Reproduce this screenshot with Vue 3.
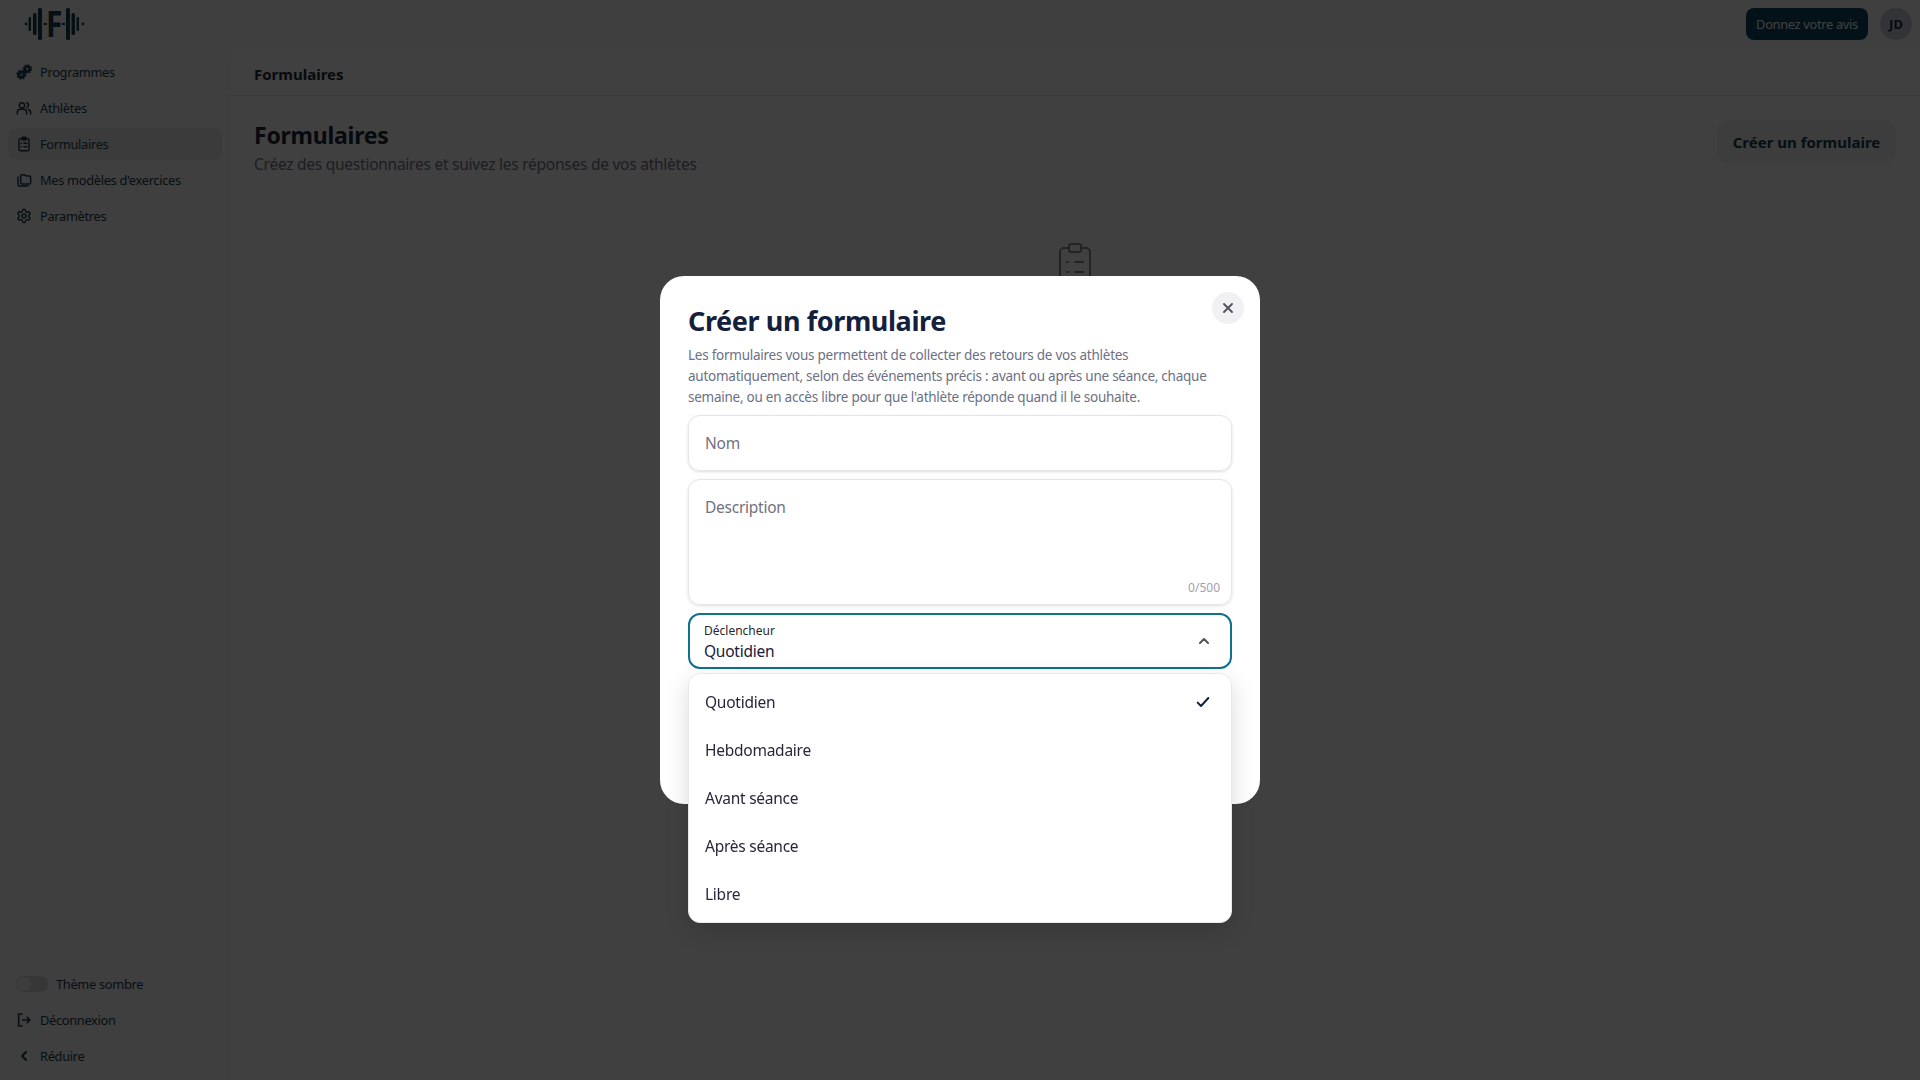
<script setup>
const nav = [
  { label: 'Programmes', icon: 'prog' },
  { label: 'Athlètes', icon: 'users' },
  { label: 'Formulaires', icon: 'clip', active: true },
  { label: "Mes modèles d'exercices", icon: 'copy' },
  { label: 'Paramètres', icon: 'gear' }
]
const options = ['Quotidien', 'Hebdomadaire', 'Avant séance', 'Après séance', 'Libre']
</script>

<template>
  <div class="page">
    <aside class="side">
      <div class="logo">
        <svg width="62" height="34" viewBox="0 0 62 34" fill="currentColor">
          <circle cx="2" cy="17" r="1.4" />
          <rect x="4.5" y="10" width="2.5" height="14" rx="1" />
          <rect x="9" y="6" width="3.5" height="22" rx="1.5" />
          <rect x="14" y="1" width="4" height="32" rx="1.5" />
          <rect x="19.5" y="16" width="3.5" height="2" />
          <rect x="38" y="16" width="3" height="2" />
          <rect x="42" y="1" width="4" height="32" rx="1.5" />
          <rect x="47.5" y="6" width="3.5" height="22" rx="1.5" />
          <rect x="52.5" y="10" width="2.5" height="14" rx="1" />
          <circle cx="59" cy="17" r="1.4" />
        </svg>
        <span class="logo-f">F</span>
      </div>
      <nav class="nav">
        <a v-for="n in nav" :key="n.label" class="item" :class="{ active: n.active }">
          <svg class="ic" viewBox="0 0 24 24" fill="none" stroke="currentColor" stroke-width="2.2" stroke-linecap="round" stroke-linejoin="round">
            <template v-if="n.icon === 'prog'">
              <circle cx="8" cy="16" r="5" fill="currentColor" />
              <circle cx="8" cy="16" r="6.5" stroke-width="2.4" stroke-dasharray="2.2 2.9" stroke-linecap="butt" />
              <circle cx="17" cy="7.5" r="4.5" fill="currentColor" />
              <circle cx="17" cy="7.5" r="6" stroke-width="2.4" stroke-dasharray="2.2 2.5" stroke-linecap="butt" />
              <path d="M6.5 14.5l3 3M9.5 14.5l-3 3M15.5 6l3 3M18.5 6l-3 3" stroke="#fff" stroke-width="1.3" />
            </template>
            <template v-else-if="n.icon === 'users'">
              <circle cx="9" cy="8" r="4" />
              <path d="M2 21v-2a5 5 0 0 1 5-5h4a5 5 0 0 1 5 5v2" />
              <path d="M16 4.2a4 4 0 0 1 0 7.6M22 21v-2a5 5 0 0 0-3.5-4.8" />
            </template>
            <template v-else-if="n.icon === 'clip'">
              <rect x="4.5" y="4" width="15" height="18" rx="2" />
              <rect x="9" y="2" width="6" height="4" rx="1" />
              <path d="M8 11h.5M12 11h4M8 16h.5M12 16h4" />
            </template>
            <template v-else-if="n.icon === 'copy'">
              <path d="M7 16V6a2 2 0 0 1 2-2h4l2 2h5a2 2 0 0 1 2 2v8a2 2 0 0 1-2 2H9a2 2 0 0 1-2-2z" />
              <path d="M3 8v11a2 2 0 0 0 2 2h13" />
            </template>
            <template v-else>
              <circle cx="12" cy="12" r="3" />
              <path d="M12.22 2h-.44a2 2 0 0 0-2 2v.18a2 2 0 0 1-1 1.73l-.43.25a2 2 0 0 1-2 0l-.15-.08a2 2 0 0 0-2.73.73l-.22.38a2 2 0 0 0 .73 2.73l.15.1a2 2 0 0 1 1 1.72v.51a2 2 0 0 1-1 1.74l-.15.09a2 2 0 0 0-.73 2.73l.22.38a2 2 0 0 0 2.73.73l.15-.08a2 2 0 0 1 2 0l.43.25a2 2 0 0 1 1 1.73V20a2 2 0 0 0 2 2h.44a2 2 0 0 0 2-2v-.18a2 2 0 0 1 1-1.73l.43-.25a2 2 0 0 1 2 0l.15.08a2 2 0 0 0 2.73-.73l.22-.39a2 2 0 0 0-.73-2.73l-.15-.08a2 2 0 0 1-1-1.74v-.5a2 2 0 0 1 1-1.74l.15-.09a2 2 0 0 0 .73-2.73l-.22-.38a2 2 0 0 0-2.73-.73l-.15.08a2 2 0 0 1-2 0l-.43-.25a2 2 0 0 1-1-1.73V4a2 2 0 0 0-2-2z" />
            </template>
          </svg>
          <span>{{ n.label }}</span>
        </a>
      </nav>
      <div class="side-bottom">
        <div class="item theme"><span class="toggle"><span class="knob"></span></span><span>Thème sombre</span></div>
        <a class="item">
          <svg class="ic" viewBox="0 0 24 24" fill="none" stroke="currentColor" stroke-width="2.4" stroke-linecap="round" stroke-linejoin="round"><path d="M9 3H4v18h5M10 12h11M17 8l4 4-4 4" /></svg>
          <span>Déconnexion</span>
        </a>
        <a class="item">
          <svg class="ic" viewBox="0 0 24 24" fill="none" stroke="currentColor" stroke-width="3" stroke-linecap="round" stroke-linejoin="round"><path d="M15 6l-6 6 6 6" /></svg>
          <span>Réduire</span>
        </a>
      </div>
    </aside>

    <div class="right">
      <header class="top">
        <button class="feedback">Donnez votre avis</button>
        <span class="avatar">JD</span>
      </header>
      <main class="main">
        <div class="crumb">Formulaires</div>
        <div class="body">
          <div class="head">
            <div>
              <h1>Formulaires</h1>
              <p>Créez des questionnaires et suivez les réponses de vos athlètes</p>
            </div>
            <button class="create">Créer un formulaire</button>
          </div>
          <div class="empty">
            <svg width="48" height="48" viewBox="0 0 24 24" fill="none" stroke="currentColor" stroke-width="1" stroke-linecap="round" stroke-linejoin="round">
              <rect x="4.5" y="4" width="15" height="18" rx="2" />
              <rect x="9" y="2" width="6" height="4" rx="1" fill="#fff" />
              <path d="M8 11h.5M12 11h4M8 16h.5M12 16h4" />
            </svg>
          </div>
        </div>
      </main>
    </div>

    <div class="overlay">
      <section class="modal">
        <button class="close" aria-label="Fermer">
          <svg width="16" height="16" viewBox="0 0 24 24" fill="none" stroke="currentColor" stroke-width="2.8" stroke-linecap="round"><path d="M6 6l12 12M18 6L6 18" /></svg>
        </button>
        <h2>Créer un formulaire</h2>
        <p class="desc">Les formulaires vous permettent de collecter des retours de vos athlètes automatiquement, selon des événements précis : avant ou après une séance, chaque semaine, ou en accès libre pour que l'athlète réponde quand il le souhaite.</p>
        <div class="field name">Nom</div>
        <div class="field area">
          <span>Description</span>
          <small>0/500</small>
        </div>
        <div class="select-wrap">
          <div class="select">
            <div class="select-text">
              <label>Déclencheur</label>
              <span>Quotidien</span>
            </div>
            <svg width="16" height="16" viewBox="0 0 24 24" fill="none" stroke="#52525b" stroke-width="3" stroke-linecap="round" stroke-linejoin="round"><path d="M6 15l6-6 6 6" /></svg>
          </div>
          <ul class="menu">
            <li v-for="(o, i) in options" :key="o">
              <span>{{ o }}</span>
              <svg v-if="i === 0" width="16" height="16" viewBox="0 0 24 24" fill="none" stroke="#14203c" stroke-width="3" stroke-linecap="round" stroke-linejoin="round"><path d="M4 13l5 5L20 6" /></svg>
            </li>
          </ul>
        </div>
      </section>
    </div>
  </div>
</template>

<style>
html, body { margin: 0; background: #fff; }
</style>

<style scoped>
* { box-sizing: border-box; }
.page { width: 1920px; height: 1080px; display: flex; overflow: hidden; background: #fafafa; color: #1b2a3a; font-family: "Noto Sans", sans-serif; }
.side { width: 230px; flex: none; display: flex; flex-direction: column; padding: 0 8px 8px; }
.logo { height: 48px; padding-left: 16px; display: flex; align-items: center; position: relative; color: #1a3d50; }
.logo-f { position: absolute; left: 38px; top: 1px; font: 700 35px/46px "Noto Sans", sans-serif; transform: scaleX(.85); transform-origin: left center; }
.nav { margin-top: 8px; display: flex; flex-direction: column; gap: 4px; }
.item { height: 32px; display: flex; align-items: center; gap: 8px; padding: 0 8px; border-radius: 8px; font-size: 12.8px; letter-spacing: -.3px; color: #1a3d50; }
.item.active { background: #ececec; }
.ic { width: 16px; height: 16px; flex: none; }
.side-bottom { margin-top: auto; display: flex; flex-direction: column; gap: 4px; }
.toggle { width: 32px; height: 16px; border-radius: 8px; background: #d9d9d9; padding: 1px; display: block; }
.knob { width: 14px; height: 14px; border-radius: 50%; background: #f2f2f2; display: block; }
.right { flex: 1; min-width: 0; display: flex; flex-direction: column; }
.top { height: 48px; display: flex; justify-content: flex-end; align-items: center; gap: 12px; padding-right: 8px; }
.feedback { width: 122px; height: 32px; padding: 0; border: 0; border-radius: 8px; background: #0c4560; color: #fff; font: 12.8px "Noto Sans", sans-serif; letter-spacing: -.3px; }
.avatar { width: 32px; height: 32px; border-radius: 50%; background: #c9cde0; display: flex; align-items: center; justify-content: center; font-size: 13px; font-weight: 700; }
.main { flex: 1; background: #fff; border-top-left-radius: 16px; }
.crumb { height: 48px; border-bottom: 1px solid #e8e8e8; padding: 5px 0 0 24px; display: flex; align-items: center; font-size: 15px; font-weight: 700; }
.body { padding: 23px 24px 0; }
.head { display: flex; justify-content: space-between; align-items: flex-start; }
h1 { margin: 0; font-size: 23px; line-height: 32px; font-weight: 700; letter-spacing: -.25px; }
.head p { margin: 1px 0 0; font-size: 15.5px; line-height: 24px; letter-spacing: -.25px; color: #71768f; }
.create { height: 44px; margin-top: 1px; width: 179px; padding: 0; border: 0; border-radius: 12px; background: #f2f2f2; color: #1a3d50; font: 700 15px "Noto Sans", sans-serif; }
.empty { display: flex; justify-content: center; margin-top: 64px; color: #8c8c8c; }
.overlay { position: fixed; inset: 0; background: rgba(0, 0, 0, .75); display: flex; align-items: center; justify-content: center; }
.modal { width: 600px; height: 528px; position: relative; background: #fff; border-radius: 24px; padding: 28px; color: #14203c; }
.close { position: absolute; top: 16px; right: 16px; width: 32px; height: 32px; border: 0; border-radius: 50%; background: #f1f1f3; color: #52525b; display: flex; align-items: center; justify-content: center; padding: 0; }
h2 { margin: -1px 0 0; font-size: 27px; line-height: 35px; font-weight: 700; letter-spacing: -.4px; }
.desc { margin: 7px 0 0; font-size: 13.5px; line-height: 21px; letter-spacing: -.25px; color: #6b7085; }
.field { border: 1px solid #e6e6e8; border-radius: 12px; box-shadow: 0 1px 3px rgba(0, 0, 0, .14); padding: 0 16px; font-size: 15.5px; letter-spacing: -.25px; color: #71717f; }
.name { height: 56px; margin-top: 7px; display: flex; align-items: center; }
.area { height: 126px; margin-top: 8px; padding-top: 15px; line-height: 24px; position: relative; }
.area small { position: absolute; right: 11px; bottom: 8px; font-size: 12px; line-height: 16px; letter-spacing: 0; color: #a1a1aa; }
.select-wrap { position: relative; margin-top: 8px; }
.select { height: 56px; border: 2px solid #0f7091; border-radius: 12px; padding: 3px 18px 0 14px; display: flex; align-items: center; justify-content: space-between; }
.select > svg { margin-top: -3px; }
.select-text { display: flex; flex-direction: column; }
.select-text label { font-size: 12px; line-height: 16px; color: #27272a; }
.select-text span { font-size: 15.5px; line-height: 24px; letter-spacing: -.25px; color: #14203c; }
.menu { position: absolute; left: 0; right: 0; top: 60px; margin: 0; padding: 4px 0; list-style: none; background: #fff; border: 1px solid #e9e9ea; border-radius: 12px; box-shadow: 0 8px 24px rgba(0, 0, 0, .14); }
.menu li { height: 48px; padding: 0 20px 0 16px; display: flex; align-items: center; justify-content: space-between; font-size: 15.5px; letter-spacing: -.25px; color: #27273a; }
</style>
